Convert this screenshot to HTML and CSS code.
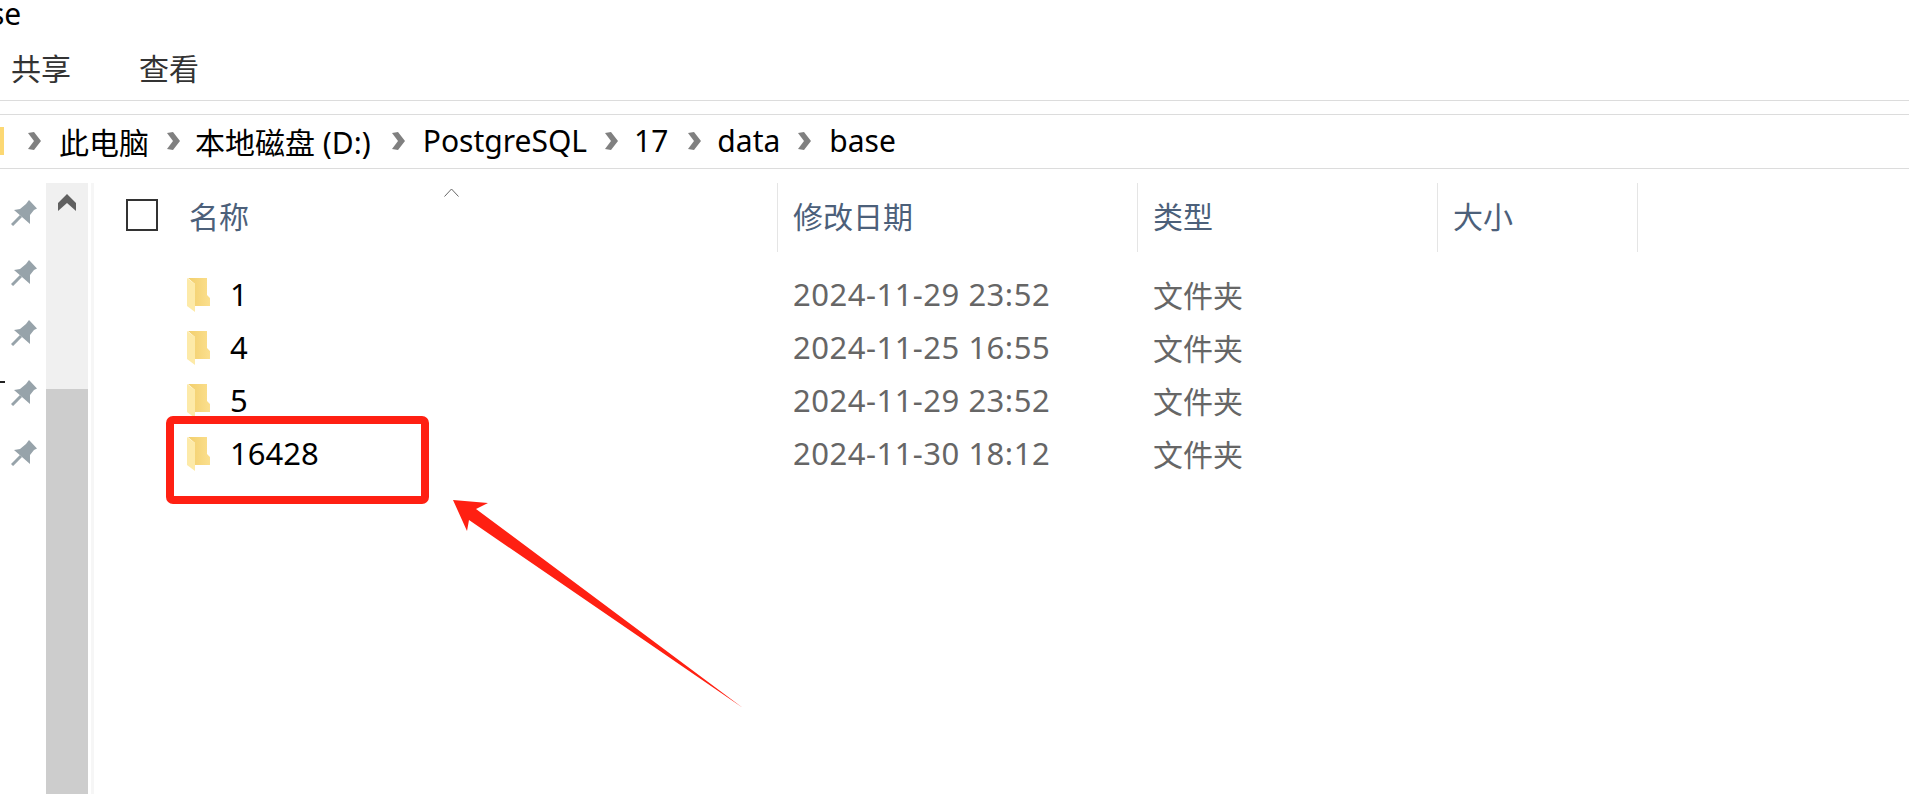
FILE: index.html
```html
<!DOCTYPE html>
<html lang="zh-CN">
<head>
    <meta charset="UTF-8">
    <title>base</title>
    <link rel="stylesheet" href="styles.css">
</head>
<body>
    <svg width="0" height="0" class="defs">
        <defs>
            <linearGradient id="folderBack" x1="0" y1="0" x2="1" y2="0">
                <stop offset="0" stop-color="#f2cf6c"/>
                <stop offset="1" stop-color="#fbdf8e"/>
            </linearGradient>
        </defs>
        <symbol id="pin" viewBox="0 0 26 26">
            <polygon points="18,0 26,8.5 23,10 19,15 19,24 3,10 9,9 15,4" fill="#97a3aa"/>
            <line x1="1" y1="25" x2="10" y2="16" stroke="#97a3aa" stroke-width="3"/>
        </symbol>
        <symbol id="folder" viewBox="0 0 23 34">
            <polygon points="1,0 20,0 20,17 23,20 23,28 8,28 8,6" fill="url(#folderBack)"/>
            <polygon points="0,0 8,6 8,34 0,28" fill="#fdeaa8"/>
        </symbol>
        <symbol id="chev" viewBox="0 0 13 18">
            <polygon points="0,1 6,0 13,9 6,18 0,17 6,9" fill="#808080"/>
        </symbol>
    </svg>

    <div class="title">se</div>

    <div class="ribbon">
        <span>共享</span>
        <span>查看</span>
    </div>

    <div class="crumbs">
        <span class="crumb-folder"></span>
        <svg class="chev"><use href="#chev"/></svg>
        <span>此电脑</span>
        <svg class="chev"><use href="#chev"/></svg>
        <span class="pull-3">本地磁盘 (D:)</span>
        <svg class="chev push-3"><use href="#chev"/></svg>
        <span>PostgreSQL</span>
        <svg class="chev"><use href="#chev"/></svg>
        <span class="pull-2">17</span>
        <svg class="chev push-2"><use href="#chev"/></svg>
        <span class="pull-2">data</span>
        <svg class="chev"><use href="#chev"/></svg>
        <span>base</span>
    </div>

    <div class="main">
        <div class="pins">
            <svg class="pin"><use href="#pin"/></svg>
            <svg class="pin"><use href="#pin"/></svg>
            <svg class="pin"><use href="#pin"/></svg>
            <svg class="pin"><use href="#pin"/></svg>
            <svg class="pin"><use href="#pin"/></svg>
        </div>
        <div class="scrollbar">
            <div class="track">
                <svg class="arrow-up" width="18" height="17" viewBox="0 0 18 17"><polygon points="9,0 18,9 18,17 9,9 0,17 0,9" fill="#606060"/></svg>
            </div>
            <div class="thumb"></div>
        </div>
        <div class="strip"></div>

        <div class="list">
            <div class="head">
                <div class="col col-name">
                    <span class="check"></span>
                    <span>名称</span>
                    <svg class="sort" width="15" height="9" viewBox="0 0 15 9"><polyline points="0.5,8.5 7.5,1 14.5,8.5" fill="none" stroke="#666" stroke-width="1"/></svg>
                </div>
                <div class="col">修改日期</div>
                <div class="col">类型</div>
                <div class="col">大小</div>
            </div>

            <div class="rows">
                <div class="row">
                    <div class="name"><svg class="folder"><use href="#folder"/></svg><span>1</span></div>
                    <div class="meta date">2024-11-29 23:52</div>
                    <div class="meta">文件夹</div>
                    <div></div>
                </div>
                <div class="row">
                    <div class="name"><svg class="folder"><use href="#folder"/></svg><span>4</span></div>
                    <div class="meta date">2024-11-25 16:55</div>
                    <div class="meta">文件夹</div>
                    <div></div>
                </div>
                <div class="row">
                    <div class="name"><svg class="folder"><use href="#folder"/></svg><span>5</span></div>
                    <div class="meta date">2024-11-29 23:52</div>
                    <div class="meta">文件夹</div>
                    <div></div>
                </div>
                <div class="row">
                    <div class="name"><svg class="folder"><use href="#folder"/></svg><span>16428</span></div>
                    <div class="meta date">2024-11-30 18:12</div>
                    <div class="meta">文件夹</div>
                    <div></div>
                </div>
            </div>
        </div>
    </div>

    <!-- annotation drawn on top of the screenshot -->
    <div class="red-box"></div>
    <svg class="red-arrow" width="1909" height="794" viewBox="0 0 1909 794">
        <polygon points="453,500 488,503 476,509 743,708 469,520 467,531" fill="#ff2012"/>
    </svg>
    <div class="edge-mark"></div>
</body>
</html>
```

FILE: styles.css
```css
html, body {
    margin: 0;
    height: 794px;
    overflow: hidden;
}
body {
    position: relative;
    background: #fff;
    color: #000;
    font-family: "Noto Sans", "Noto Sans CJK SC", sans-serif;
    font-size: 30px;
}
.defs { position: absolute; }

.title {
    height: 45px;
    line-height: 27px;
    margin-left: -10px;
}

.ribbon {
    display: flex;
    gap: 68px;
    height: 43px;
    padding: 0 0 12px 11px;
    align-items: center;
    border-bottom: 1px solid #dcdcdc;
    color: #333;
}

.crumbs {
    display: flex;
    align-items: center;
    height: 51px;
    padding-bottom: 2px;
    margin-top: 13px;
    border-top: 1px solid #dcdcdc;
    border-bottom: 1px solid #dcdcdc;
    gap: 18px;
}
.crumb-folder {
    width: 4px;
    height: 28px;
    margin-right: 6px;
    background: #fcd873;
}
.chev {
    width: 13px;
    height: 18px;
    flex: none;
}
.pull-2 { margin-left: -2px; }
.pull-3 { margin-left: -3px; }
.push-2 { margin-left: 2px; }
.push-3 { margin-left: 3px; }

.main {
    display: flex;
    padding-top: 14px;
}
.pins {
    width: 46px;
    display: flex;
    flex-direction: column;
    gap: 34px;
    padding-top: 17px;
    box-sizing: border-box;
}
.pin {
    width: 26px;
    height: 26px;
    margin-left: 11px;
}
.scrollbar {
    width: 42px;
    height: 640px;
}
.track {
    height: 206px;
    background: #f0f0f0;
    display: flex;
    justify-content: center;
    padding-top: 11px;
    box-sizing: border-box;
}
.thumb {
    height: 434px;
    background: #cdcdcd;
}
.strip {
    width: 3px;
    height: 640px;
    margin-left: 3px;
    background: #f6f6f6;
}

.list { flex: 1; }
.head, .row {
    display: grid;
    grid-template-columns: 684px 360px 300px 200px;
}
.head {
    height: 69px;
    color: #4c607a;
}
.col {
    display: flex;
    align-items: center;
    padding-left: 15px;
    border-right: 1px solid #e5e5e5;
    padding-bottom: 6px;
    box-sizing: border-box;
}
.col-name {
    position: relative;
    padding-left: 32px;
    gap: 31px;
}
.check {
    width: 28px;
    height: 28px;
    border: 2px solid #333;
}
.sort {
    position: absolute;
    left: 350px;
    top: 5px;
}

.rows { padding-top: 16px; }
.row {
    height: 53px;
    align-items: center;
}
.name {
    display: flex;
    align-items: center;
    padding-left: 93px;
    gap: 20px;
    font-size: 31px;
}
.name span { padding-bottom: 2px; }
.folder {
    width: 23px;
    height: 34px;
}
.meta {
    padding: 0 0 2px 15px;
    color: #666;
}
.date {
    font-size: 31px;
    letter-spacing: 0.5px;
}

.red-box {
    position: absolute;
    left: 166px;
    top: 416px;
    width: 247px;
    height: 72px;
    border: 8px solid #ff2012;
    border-radius: 7px;
}
.red-arrow {
    position: absolute;
    left: 0;
    top: 0;
}
.edge-mark {
    position: absolute;
    left: 0;
    top: 381px;
    width: 5px;
    height: 2px;
    background: #222;
}
```
